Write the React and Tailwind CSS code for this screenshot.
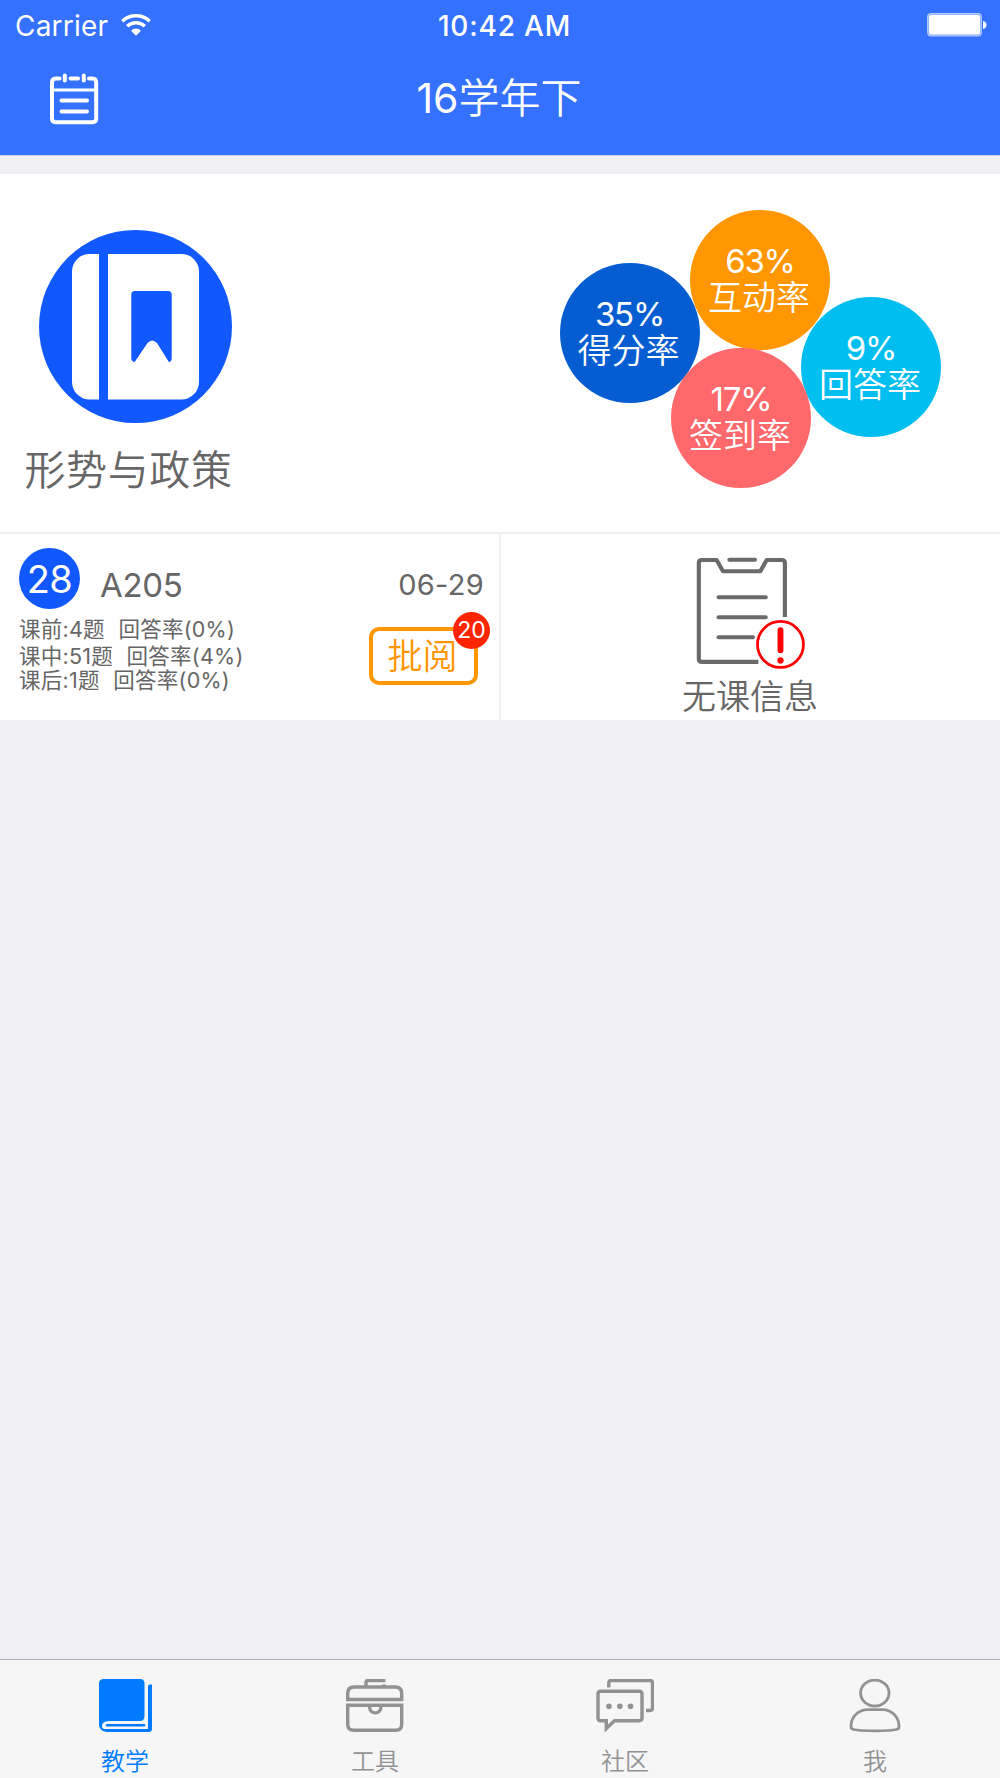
const rates = [
    { label: "得分率", value: "35%", className: "left-[19.5px] top-[53px] bg-[#055dd1]" },
    { label: "互动率", value: "63%", className: "left-[150px] top-0 bg-[#ff9602]" },
    { label: "回答率", value: "9%", className: "left-[261px] top-[87px] bg-[#00bef0]" },
    { label: "签到率", value: "17%", className: "left-[131px] top-[138px] bg-[#ff696b]" },
];

const stats = [
    { text: "课前:4题  回答率(0%)", className: "h-[26px] leading-[27px]" },
    { text: "课中:51题  回答率(4%)", className: "h-[26px] leading-[28px]" },
    { text: "课后:1题  回答率(0%)", className: "h-[24px] leading-[25px]" },
];

const tabs = [
    { label: "教学", icon: BookIcon, active: true },
    { label: "工具", icon: ToolboxIcon },
    { label: "社区", icon: ChatIcon },
    { label: "我", icon: PersonIcon },
];

function WifiIcon() {
    return (
        <svg width="30" height="22" viewBox="0 0 30 22" fill="none" stroke="#fff" strokeWidth="3.4">
            <path d="M1.3 7.2C5 3.5 9.7 1.7 15 1.7S25 3.5 28.7 7.2" />
            <path d="M6.2 12.3C8.6 10 11.6 8.7 15 8.7S21.4 10 23.8 12.3" />
            <path d="M15 21.7L10.2 16.9C11.5 15.3 13.1 14.6 15 14.6S18.5 15.3 19.8 16.9Z" fill="#fff" stroke="none" />
        </svg>
    );
}

function BatteryIcon() {
    return (
        <svg width="60" height="24" viewBox="0 0 60 24">
            <rect x="0.7" y="0.7" width="53.6" height="22.3" rx="3.5" fill="#84aaff" stroke="#b8cdff" strokeWidth="1.2" />
            <rect x="2" y="2" width="51" height="19.5" rx="2.5" fill="#fff" />
            <path d="M56 8C58.4 8.5 59.5 10 59.5 12S58.4 15.5 56 16Z" fill="#fff" />
        </svg>
    );
}

function CalendarIcon() {
    return (
        <svg width="50" height="52" viewBox="0 0 50 52" fill="none" stroke="#fff" strokeWidth="4" strokeLinecap="round">
            <path d="M9.5 5.5H6Q2 5.5 2 9.5V45.5Q2 49.2 5.7 49.2H42.5Q46.2 49.2 46.2 45.5V9.5Q46.2 5.5 42.5 5.5H39" />
            <path d="M20.5 5.5H28" />
            <path d="M14.8 2.5V7.5M33.8 2.5V7.5" />
            <path d="M3 17H46" strokeWidth="3.2" />
            <path d="M11.5 27.5H37M11.5 38.5H37" />
        </svg>
    );
}

function CourseIcon() {
    return (
        <svg width="193" height="193" viewBox="0 0 193 193">
            <circle cx="96.5" cy="96.5" r="96.5" fill="#1159ff" />
            <path d="M60 24H50.5A17.5 17.5 0 0 0 33 41.5V152A17.5 17.5 0 0 0 50.5 169.5H60Z" fill="#fff" />
            <path d="M69 24H142.5A17.5 17.5 0 0 1 160 41.5V152A17.5 17.5 0 0 1 142.5 169.5H69Z" fill="#fff" />
            <path d="M92.3 64.5Q92.3 61 96 61H129Q132.7 61 132.7 64.5V129Q132.7 131.5 130 132.3L118 113Q113 108 108.5 113L95.5 132.3Q92.3 131 92.3 128.5Z" fill="#1159ff" />
        </svg>
    );
}

function ClipboardIcon() {
    return (
        <svg width="110" height="115" viewBox="0 0 110 115" fill="none" stroke="#6a6a6a" strokeWidth="4.2" strokeLinecap="round">
            <path d="M62.5 106.7H5Q1.9 106.7 1.9 103.7V6Q1.9 3 5 3H20L26.5 14.5H64.5L71 3H86Q89.5 3 89.5 6V61" strokeLinejoin="round" strokeLinecap="butt" />
            <path d="M33 2.8H59" />
            <path d="M22 41H70M22 61.3H70" />
            <path d="M22 81.7H57" />
            <circle cx="85" cy="89" r="27" fill="#fff" stroke="none" />
            <circle cx="85" cy="89" r="23.4" stroke="#fe0000" strokeWidth="2.8" />
            <path d="M85 74.5V95" stroke="#fe0000" strokeWidth="6" />
            <circle cx="85" cy="105.3" r="3.2" fill="#fe0000" stroke="none" />
        </svg>
    );
}

function BookIcon() {
    return (
        <svg width="58" height="54" viewBox="0 0 58 54">
            <path d="M8 0H44Q48.5 0 48.5 4.5V37Q48.5 42 44 42H13Q6 42.5 6 47Q6 50 8.5 50H52V7.5Q52 5.5 54 5.5H56V50Q56 53 52.5 53H11Q3 52 3 45.5V4.5Q3 0 8 0Z" fill="#007aff" />
            <path d="M11 46.2H48" stroke="#007aff" strokeWidth="2.6" strokeLinecap="round" />
        </svg>
    );
}

function ToolboxIcon() {
    return (
        <svg width="58" height="54" viewBox="0 0 58 54" fill="none" stroke="#929292" strokeWidth="3.4">
            <path d="M20 8V3.5Q20 1.5 22 1.5H39.5" />
            <path d="M36 6.5H40" strokeWidth="2" />
            <path d="M1.7 20.5V14.5Q1.7 8 8.2 8H49.2Q55.7 8 55.7 14.5V20.5Z" />
            <path d="M1.7 26.2H55.7V45.2Q55.7 51.3 49.7 51.3H7.7Q1.7 51.3 1.7 45.2Z" />
            <path d="M23.5 27.5C23.5 36 35 36 35 27.5" />
        </svg>
    );
}

function ChatIcon() {
    return (
        <svg width="58" height="54" viewBox="0 0 58 54" fill="none" stroke="#929292" strokeWidth="3.4">
            <path d="M12.8 8.5V4Q12.8 1.5 15.3 1.5H53.8Q56.5 1.5 56.5 4V28.7Q56.5 31.5 53.8 31.5H50" />
            <path d="M4.5 12.2H43Q46 12.2 46 15V39Q46 41.7 43 41.7H18.5L10.3 49.5V41.7H4.5Q2 41.7 2 39V15Q2 12.2 4.5 12.2Z" />
            <g fill="#929292" stroke="none">
                <circle cx="13" cy="27.3" r="2.8" />
                <circle cx="23.8" cy="27.3" r="2.8" />
                <circle cx="34.5" cy="27.3" r="2.8" />
            </g>
        </svg>
    );
}

function PersonIcon() {
    return (
        <svg width="58" height="54" viewBox="0 0 58 54" fill="none" stroke="#929292" strokeWidth="2.8">
            <ellipse cx="28.8" cy="14" rx="14.2" ry="13" />
            <path d="M22 30.7H36C47 30.7 53 39 53 47.5Q53 50 50.5 50.5C44 52.3 14 52.3 7.5 50.5Q5 50 5 47.5C5 39 11 30.7 22 30.7Z" />
        </svg>
    );
}

function Header() {
    return (
        <header className="h-[156px] shrink-0 border-b border-[#c9cfe6] bg-[#3371fe] text-white">
            <div className="grid h-[50px] grid-cols-3 items-center pr-[13px] pl-[15px]">
                <div className="flex items-center gap-[13px]">
                    <span className="pt-px text-[28px] tracking-[0.2px]">Carrier</span>
                    <WifiIcon />
                </div>
                <span className="pt-px pl-[7px] text-center text-[28px] font-medium tracking-[0.8px] whitespace-nowrap">10:42 AM</span>
                <div className="flex justify-end">
                    <BatteryIcon />
                </div>
            </div>
            <div className="grid h-[98px] grid-cols-[200px_1fr_200px] items-center">
                <button type="button" className="ml-[50px] w-[50px]">
                    <CalendarIcon />
                </button>
                <h1 className="-mt-[3px] pr-[2px] text-center text-[41px] leading-[60px] font-[350]">
                    <span className="font-normal">16</span>学年下
                </h1>
            </div>
        </header>
    );
}

function RateBubbles() {
    return (
        <div className="relative mt-9 h-[280px] w-[460px]">
            {rates.map((rate) => (
                <div
                    key={rate.label}
                    className={`absolute flex size-[140px] flex-col items-center rounded-full pt-[33px] text-white ${rate.className}`}
                >
                    <span className="text-[33px] leading-[37px] tracking-[-1.2px]">{rate.value}</span>
                    <span className="pr-[2px] text-[34px] leading-[36px] font-[350]">{rate.label}</span>
                </div>
            ))}
        </div>
    );
}

function CourseCard() {
    return (
        <section className="mt-[18px] flex h-[358px] shrink-0 justify-between bg-white">
            <div className="flex flex-col pt-[55.5px] pl-[24.5px]">
                <div className="ml-[14.5px]">
                    <CourseIcon />
                </div>
                <h2 className="mt-[17px] text-[41px] leading-[60px] font-[350] tracking-[0.6px] whitespace-nowrap">形势与政策</h2>
            </div>
            <RateBubbles />
        </section>
    );
}

function LessonCard() {
    return (
        <div className="flex w-[499px] justify-between bg-white pt-[14px] pr-[15px] pl-[19px]">
            <div>
                <div className="flex items-center gap-5">
                    <span className="flex size-[61px] items-center justify-center rounded-full bg-[#1159ff] pt-[2px] text-[38px] tracking-[-0.5px] text-white">
                        28
                    </span>
                    <span className="pt-[12px] text-[33px] leading-[48px] tracking-[-0.3px]">A205</span>
                </div>
                <div className="mt-[7px] text-[21.5px] tracking-[0.25px] whitespace-pre [word-spacing:0.5px]">
                    {stats.map((stat) => (
                        <p key={stat.text} className={stat.className}>
                            {stat.text}
                        </p>
                    ))}
                </div>
            </div>
            <div className="flex flex-col items-end">
                <span className="mt-[17px] text-[29px] leading-10 tracking-[0.3px]">06-29</span>
                <button
                    type="button"
                    className="relative mt-[22px] mr-[6px] h-[58px] w-[109px] rounded-[10px] border-4 border-[#ff9602] pr-[2px] text-[35px] leading-[51px] font-[350] text-[#ff9602]"
                >
                    批阅
                    <span className="absolute -top-[19px] -right-[16px] flex size-[37px] items-center justify-center rounded-full bg-[#fe2400] text-[23px] font-normal text-white">
                        20
                    </span>
                </button>
            </div>
        </div>
    );
}

function EmptyCard() {
    return (
        <div className="flex flex-1 flex-col items-center bg-white pt-[23px]">
            <ClipboardIcon />
            <p className="mt-[4px] pr-px text-[34px] leading-[46px] font-[350]">无课信息</p>
        </div>
    );
}

function TabBar() {
    return (
        <nav className="mt-auto grid h-[119px] shrink-0 grid-cols-4 border-t border-[#b2b2b4] bg-[#f6f6f7]">
            {tabs.map(({ label, icon: Icon, active }) => (
                <a
                    key={label}
                    className={`flex flex-col items-center pt-[19px] font-[350] ${active ? "text-[#007aff]" : "text-[#929292]"}`}
                >
                    <Icon />
                    <span className="mt-[15px] text-[24px] leading-[28px]">{label}</span>
                </a>
            ))}
        </nav>
    );
}

export default function App() {
    return (
        <div className="flex h-[1778px] w-[1000px] flex-col overflow-hidden bg-[#efeff4] font-['Inter','Noto_Sans_CJK_SC',sans-serif] text-[#666]">
            <Header />
            <CourseCard />
            <section className="mt-[2px] flex h-[186px] shrink-0 gap-[2px]">
                <LessonCard />
                <EmptyCard />
            </section>
            <TabBar />
        </div>
    );
}
